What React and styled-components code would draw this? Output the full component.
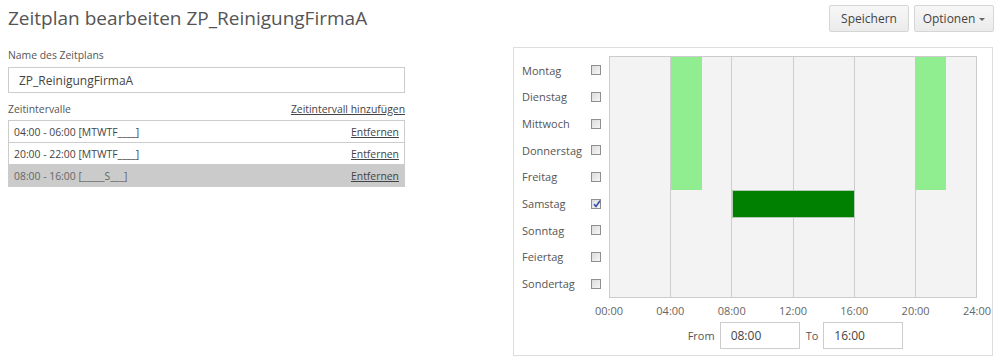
import styled, { createGlobalStyle } from "styled-components";

const GlobalStyle = createGlobalStyle`
  html, body {
    margin: 0;
    padding: 0;
    background: #fff;
    font-family: "Open Sans", "Liberation Sans", sans-serif;
    color: #555;
  }
`;

const Page = styled.div`
  width: 1000px;
  height: 362px;
  overflow: hidden;
`;

const Header = styled.div`
  display: flex;
  justify-content: space-between;
  align-items: flex-start;
  height: 47px;
  padding: 0 6px 0 8px;
  box-sizing: border-box;
`;

const Title = styled.h1`
  margin: 0;
  font-size: 19px;
  font-weight: 400;
  line-height: 37px;
  color: #555;
`;

const Toolbar = styled.div`
  display: flex;
  gap: 5px;
  padding-top: 5px;
`;

const Button = styled.button`
  display: flex;
  align-items: center;
  justify-content: center;
  gap: 4px;
  width: 80px;
  height: 27px;
  padding: 0;
  border: 1px solid #d6d6d6;
  border-radius: 2px;
  background: linear-gradient(#f7f7f7, #ebebeb);
  font-family: inherit;
  font-size: 12px;
  color: #444;
`;

const Caret = styled.span`
  width: 0;
  height: 0;
  border-left: 3px solid transparent;
  border-right: 3px solid transparent;
  border-top: 3px solid #666;
  margin-top: 1px;
`;

const Body = styled.div`
  display: flex;
  justify-content: space-between;
  align-items: flex-start;
  padding: 0 7px 0 8px;
`;

const LeftColumn = styled.div`
  width: 397px;
  display: flex;
  flex-direction: column;
`;

const Label = styled.div`
  font-size: 10.4px;
  line-height: 16px;
  color: #555;
`;

const TextInput = styled.div`
  box-sizing: border-box;
  height: ${(p) => p.$height || 26}px;
  width: ${(p) => (p.$width ? p.$width + "px" : "auto")};
  margin-top: ${(p) => p.$mt || 0}px;
  border: 1px solid #ccc;
  padding-left: 10px;
  display: flex;
  align-items: center;
  font-size: 12px;
  color: #444;
  background: #fff;
`;

const SectionHead = styled.div`
  display: flex;
  justify-content: space-between;
  margin-top: 8px;
  font-size: 10.4px;
  line-height: 16px;
`;

const UnderLink = styled.a`
  color: #444;
  text-decoration: underline;
  font-size: 10.4px;
`;

const List = styled.div`
  margin-top: 3px;
  border: 1px solid #ccc;
  border-bottom: none;
`;

const ListRow = styled.div`
  display: flex;
  justify-content: space-between;
  align-items: center;
  height: 21px;
  padding: 0 5px;
  border-bottom: 1px solid #ccc;
  font-size: 10.4px;
  color: ${(p) => (p.$selected ? "#666" : "#444")};
  background: ${(p) => (p.$selected ? "#cbcbcb" : "#fff")};
`;

const Panel = styled.div`
  box-sizing: border-box;
  width: 480px;
  height: 309px;
  border: 1px solid #ddd;
  padding: 8px 15px 0 8px;
  display: flex;
  flex-direction: column;
`;

const ChartRow = styled.div`
  display: flex;
  gap: 8px;
`;

const DayList = styled.div`
  display: grid;
  grid-template-rows: repeat(9, 1fr);
  height: 242px;
  padding: 1px 0;
  box-sizing: border-box;
`;

const DayRow = styled.div`
  display: grid;
  grid-template-columns: 69px 10px;
  align-items: center;
  font-size: 11px;
  color: #555;
`;

const Check = styled.span`
  box-sizing: border-box;
  width: 10px;
  height: 10px;
  border: 1px solid #8f8f8f;
  background: linear-gradient(135deg, #dcdcdc, #f6f6f6);
  position: relative;

  svg {
    position: absolute;
    left: 0;
    top: -1px;
  }
`;

const Chart = styled.div`
  position: relative;
  box-sizing: border-box;
  width: 368px;
  height: 242px;
  border: 1px solid #ccc;
  background: #f3f3f3;
  display: flex;
`;

const Column = styled.div`
  flex: 1;
  border-left: ${(p) => (p.$first ? "none" : "1px solid #cdcdcd")};
`;

const Bar = styled.div`
  position: absolute;
  box-sizing: border-box;
  background: ${(p) => (p.$selected ? "#008000" : "#90ee90")};
  border: ${(p) => (p.$selected ? "1px solid #b5c9b5" : "none")};
`;

const ChartArea = styled.div`
  display: flex;
  flex-direction: column;
  width: 368px;
`;

const Axis = styled.div`
  display: flex;
  justify-content: space-between;
  margin: 0 -20px;
  height: 24px;
  align-items: center;
`;

const Tick = styled.span`
  width: 40px;
  text-align: center;
  font-size: 11px;
  color: #666;
`;

const RangeRow = styled.div`
  display: flex;
  align-items: center;
  justify-content: center;
  padding-left: 5px;
`;

const RangeLabel = styled.span`
  font-size: 11px;
  color: #555;
  margin: 0 ${(p) => p.$mr || 0}px 0 ${(p) => p.$ml || 0}px;
`;

const days = [
  "Montag",
  "Dienstag",
  "Mittwoch",
  "Donnerstag",
  "Freitag",
  "Samstag",
  "Sonntag",
  "Feiertag",
  "Sondertag",
];

const intervals = [
  { text: "04:00 - 06:00 [MTWTF____]", from: 4, to: 6, days: [0, 5] },
  { text: "20:00 - 22:00 [MTWTF____]", from: 20, to: 22, days: [0, 5] },
  { text: "08:00 - 16:00 [_____S___]", from: 8, to: 16, days: [5, 6], selected: true },
];

const ticks = ["00:00", "04:00", "08:00", "12:00", "16:00", "20:00", "24:00"];

const INNER_W = 366;
const INNER_H = 240;

export default function App() {
  return (
    <Page>
      <GlobalStyle />
      <Header>
        <Title>Zeitplan bearbeiten ZP_ReinigungFirmaA</Title>
        <Toolbar>
          <Button>Speichern</Button>
          <Button>
            Optionen <Caret />
          </Button>
        </Toolbar>
      </Header>
      <Body>
        <LeftColumn>
          <Label>Name des Zeitplans</Label>
          <TextInput $mt={4}>ZP_ReinigungFirmaA</TextInput>
          <SectionHead>
            <span>Zeitintervalle</span>
            <UnderLink>Zeitintervall hinzufügen</UnderLink>
          </SectionHead>
          <List>
            {intervals.map((it) => (
              <ListRow key={it.text} $selected={it.selected}>
                <span>{it.text}</span>
                <UnderLink>Entfernen</UnderLink>
              </ListRow>
            ))}
          </List>
        </LeftColumn>
        <Panel>
          <ChartRow>
            <DayList>
              {days.map((d) => (
                <DayRow key={d}>
                  <span>{d}</span>
                  <Check>
                    {d === "Samstag" && (
                      <svg width="10" height="10" viewBox="0 0 10 10">
                        <path
                          d="M2 5.2 L4 7.4 L8 1.8"
                          fill="none"
                          stroke="#3a4fb0"
                          strokeWidth="1.6"
                        />
                      </svg>
                    )}
                  </Check>
                </DayRow>
              ))}
            </DayList>
            <ChartArea>
              <Chart>
                {[0, 1, 2, 3, 4, 5].map((i) => (
                  <Column key={i} $first={i === 0} />
                ))}
                {intervals.map((it) => (
                  <Bar
                    key={it.text}
                    $selected={it.selected}
                    style={{
                      left: (it.from / 24) * INNER_W,
                      width: ((it.to - it.from) / 24) * INNER_W + (it.selected ? 1 : 0),
                      top: (it.days[0] / 9) * INNER_H,
                      height: ((it.days[1] - it.days[0]) / 9) * INNER_H + (it.selected ? 1 : 0),
                    }}
                  />
                ))}
              </Chart>
              <Axis>
                {ticks.map((t) => (
                  <Tick key={t}>{t}</Tick>
                ))}
              </Axis>
              <RangeRow>
                <RangeLabel $mr={5}>From</RangeLabel>
                <TextInput $width={80} $height={27}>08:00</TextInput>
                <RangeLabel $ml={6} $mr={5}>To</RangeLabel>
                <TextInput $width={80} $height={27}>16:00</TextInput>
              </RangeRow>
            </ChartArea>
          </ChartRow>
        </Panel>
      </Body>
    </Page>
  );
}
